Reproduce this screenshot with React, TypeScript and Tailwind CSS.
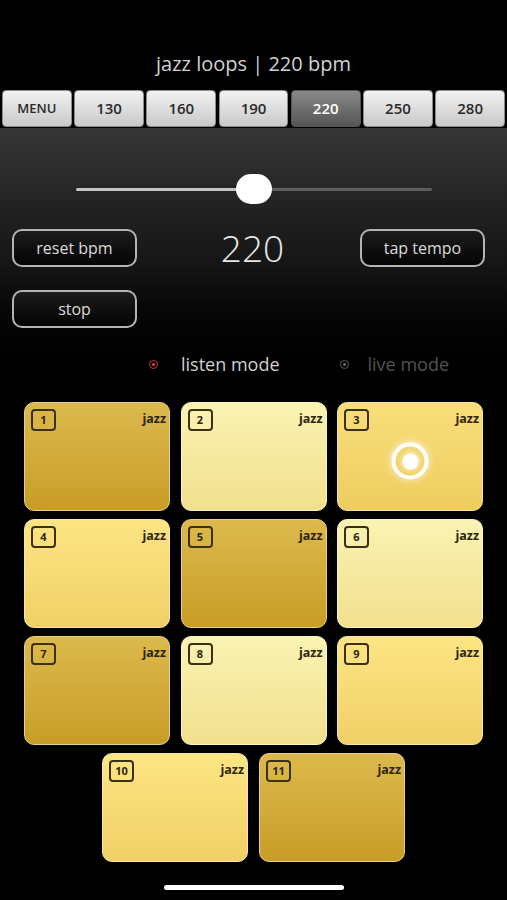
import React from 'react';

const tabs = ['MENU', '130', '160', '190', '220', '250', '280'];

type Tone = 'dark' | 'light' | 'mid' | 'warm';

const toneClass: Record<Tone, string> = {
  dark: 'bg-linear-to-b from-[#dcb94c] to-[#c89d25] border-[#e6d08a]',
  light: 'bg-linear-to-b from-[#faf3b2] to-[#f1e08e] border-[#fbf3c0]',
  mid: 'bg-linear-to-b from-[#fde584] to-[#f0d066] border-[#f8e7a0]',
  warm: 'bg-linear-to-b from-[#f8de7a] to-[#eecd5e] border-[#f6e49c]',
};

const pads: { n: number; tone: Tone; playing?: boolean }[] = [
  { n: 1, tone: 'dark' },
  { n: 2, tone: 'light' },
  { n: 3, tone: 'warm', playing: true },
  { n: 4, tone: 'mid' },
  { n: 5, tone: 'dark' },
  { n: 6, tone: 'light' },
  { n: 7, tone: 'dark' },
  { n: 8, tone: 'light' },
  { n: 9, tone: 'mid' },
];

function Pad({ n, tone, playing }: { n: number; tone: Tone; playing?: boolean }) {
  return (
    <div className={`relative h-[109px] w-[146px] rounded-[10px] border ${toneClass[tone]}`}>
      <div className="flex items-start justify-between pl-[6px] pr-[3px] pt-[6px]">
        <div className="flex h-[22px] w-[25px] items-center justify-center rounded-[4px] border-2 border-[#3b3118] text-[11px] font-bold text-[#2e2610]">
          {n}
        </div>
        <span className="text-[12.5px] font-bold leading-[20px] text-[#2e2610]">jazz</span>
      </div>
      {playing && (
        <div className="absolute left-1/2 top-[58px] flex h-[37px] w-[37px] -translate-x-1/2 -translate-y-1/2 items-center justify-center rounded-full border-[4px] border-white shadow-[0_0_8px_rgba(255,255,255,0.8)]">
          <div className="h-[16px] w-[16px] rounded-full bg-white shadow-[0_0_6px_rgba(255,255,255,0.9)]" />
        </div>
      )}
    </div>
  );
}

function OutlineButton({ label }: { label: string }) {
  return (
    <button className="flex h-[38px] w-[125px] items-center justify-center rounded-[10px] border-2 border-[#b4b4b4] bg-linear-to-b from-[#1c1c1c] to-[#050505] text-[16px] text-[#dcdcdc]">
      {label}
    </button>
  );
}

export default function App() {
  return (
    <div className="h-[900px] w-full overflow-hidden bg-black" style={{ fontFamily: '"Open Sans", Lato, sans-serif' }}>
      <div className="pt-[52px] text-center text-[20px] leading-[24px] text-[#d2d2d2]">jazz loops | 220 bpm</div>

      <div className="mt-[14px] flex gap-[2.5px] px-[2px]">
        {tabs.map((t) => {
          const active = t === '220';
          return (
            <div
              key={t}
              className={`flex h-[37px] flex-1 items-center justify-center rounded-[4px] border ${
                active
                  ? 'border-[#555] bg-linear-to-b from-[#8a8a8a] to-[#555] text-white'
                  : 'border-[#8c8c8c] bg-linear-to-b from-[#f2f2f2] to-[#c9c9c9] text-[#2a2a2a]'
              } ${t === 'MENU' ? 'text-[13px] font-semibold' : 'text-[15px] font-semibold'}`}
            >
              {t}
            </div>
          );
        })}
      </div>

      <div className="mt-[1px] bg-linear-to-b from-[#363636] via-[#151515] to-black pb-[26px]">
        <div className="pt-[46px]">
          <div className="relative ml-[76px] mr-[75px] h-[30px]">
            <div className="absolute left-0 right-0 top-[14px] flex h-[3px]">
              <div className="h-full w-1/2 rounded-l-full bg-[#c4c4c4]" />
              <div className="h-full w-1/2 rounded-r-full bg-[#5e5e5e]" />
            </div>
            <div className="absolute left-1/2 top-0 h-[30px] w-[36px] -translate-x-1/2 rounded-full bg-white" />
          </div>
        </div>

        <div className="mt-[25px] flex items-center pl-[12px] pr-[22px]">
          <OutlineButton label="reset bpm" />
          <div className="flex-1 pl-[8px] text-center text-[37px] font-light leading-[38px] text-[#e6e6e6]">220</div>
          <OutlineButton label="tap tempo" />
        </div>

        <div className="mt-[23px] pl-[12px]">
          <OutlineButton label="stop" />
        </div>

        <div className="mt-[24px] flex h-[24px] items-center text-[18px]">
          <div className="ml-[149px] flex h-[9px] w-[9px] items-center justify-center rounded-full border border-[#d0343a]">
            <div className="h-[3px] w-[3px] rounded-full bg-[#e04048]" />
          </div>
          <span className="ml-[23px] text-[#cfcfcf]">listen mode</span>
          <div className="ml-[60px] flex h-[9px] w-[9px] items-center justify-center rounded-full border border-[#5a5a5a]">
            <div className="h-[3px] w-[3px] rounded-full bg-[#6a6a6a]" />
          </div>
          <span className="ml-[19px] text-[#525252]">live mode</span>
        </div>
      </div>

      <div className="grid grid-cols-3 gap-x-[10.5px] gap-y-[8px] px-[24px]">
        {pads.map((p) => (
          <Pad key={p.n} {...p} />
        ))}
      </div>
      <div className="mt-[8px] flex justify-center gap-[11px]">
        <Pad n={10} tone="mid" />
        <Pad n={11} tone="dark" />
      </div>

      <div className="mx-auto mt-[23px] h-[5px] w-[180px] rounded-full bg-white" />
    </div>
  );
}
